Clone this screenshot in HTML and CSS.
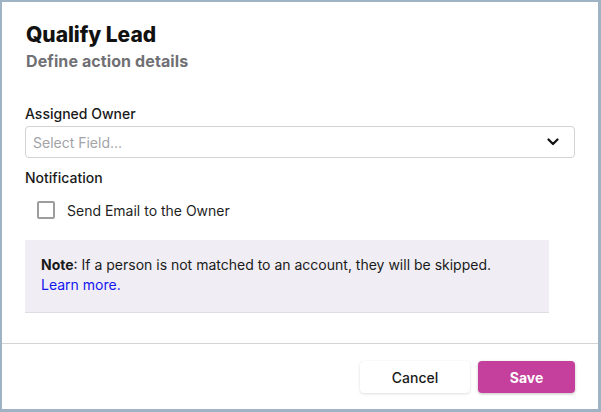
FILE: index.html
```html
<!DOCTYPE html>
<html>
<head>
<meta charset="utf-8">
<link rel="stylesheet" href="styles.css">
</head>
<body>
<div class="modal">
  <div class="content">
    <h1 class="title">Qualify Lead</h1>
    <div class="subtitle">Define action details</div>
    <div class="field">
      <div class="label">Assigned Owner</div>
      <div class="select">
        <span class="placeholder">Select Field...</span>
        <svg class="chev" width="12" height="8" viewBox="0 0 12 8"><path d="M1.5 1.5 L6 6 L10.5 1.5" fill="none" stroke="#111" stroke-width="2.2" stroke-linecap="round" stroke-linejoin="round"/></svg>
      </div>
    </div>
    <div class="label notif">Notification</div>
    <label class="check-row">
      <span class="checkbox"></span>
      <span>Send Email to the Owner</span>
    </label>
    <div class="note">
      <p><b>Note</b>: If a person is not matched to an account, they will be skipped.<br><a class="link" href="#">Learn more.</a></p>
    </div>
  </div>
  <div class="footer">
    <button class="btn cancel">Cancel</button>
    <button class="btn save">Save</button>
  </div>
</div>
</body>
</html>
```
FILE: styles.css
```css
html, body { margin: 0; padding: 0; }
body {
  background: #9fb3c4;
  padding: 2px 3px 3px 2px;
  width: 601px;
  height: 412px;
  box-sizing: border-box;
  font-family: Inter, "Noto Sans", sans-serif;
  color: #1a1a1a;
}
.modal {
  background: #fff;
  height: 407px;
  display: flex;
  flex-direction: column;
}
.content {
  padding: 21px 23px 0 23px;
  height: 342px;
  border-bottom: 1px solid #d4d4d4;
  box-sizing: border-box;
}
.title {
  margin: 0;
  font-size: 21px;
  font-weight: 800;
  line-height: 24px;
  padding-left: 1px;
  color: #111;
  letter-spacing: -0.05px;
}
.subtitle {
  margin-top: 5px;
  font-size: 16px;
  font-weight: 700;
  color: #707074;
  line-height: 18px;
  padding-left: 1px;
  letter-spacing: 0.1px;
}
.field { margin-top: 35px; }
.label {
  font-size: 14px;
  font-weight: 500;
  line-height: 17px;
  color: #1a1a1a;
}
.select {
  margin-top: 4px;
  height: 32px;
  box-sizing: border-box;
  border: 1px solid #d3d3d3;
  border-radius: 4px;
  display: flex;
  align-items: center;
  justify-content: space-between;
  padding: 0 15px 0 7px;
}
.placeholder { font-size: 14px; color: #a3a3a8; }
.chev { display: block; }
.notif { margin-top: 11px; }
.check-row {
  display: flex;
  align-items: center;
  margin-top: 15px;
  padding-left: 12px;
  font-size: 14px;
  color: #1f1f1f;
}
.checkbox {
  width: 14px;
  height: 14px;
  border: 2px solid #9d9d9d;
  border-radius: 2px;
  margin-right: 12px;
}
.note {
  margin-top: 21px;
  width: 524px;
  height: 73px;
  box-sizing: border-box;
  background: #f0eef4;
  border-bottom: 1px solid #dedde3;
  padding: 15px 16px 0 16px;
}
.note p {
  margin: 0;
  font-size: 14px;
  line-height: 20px;
  color: #1a1a1a;
}
.link { color: #1515f0; text-decoration: none; }
.footer {
  flex: 1;
  display: flex;
  justify-content: flex-end;
  align-items: flex-start;
  gap: 8px;
  padding: 17px 23px 0 0;
}
.btn {
  height: 32px;
  border: none;
  border-radius: 4px;
  font-family: Inter, "Noto Sans", sans-serif;
  font-size: 14px;
  cursor: pointer;
}
.cancel {
  width: 110px;
  background: #fff;
  color: #1a1a1a;
  font-weight: 500;
  box-shadow: 0 1px 3px rgba(0,0,0,0.12), 0 0 1px rgba(0,0,0,0.08);
}
.save {
  width: 97px;
  background: #c4409c;
  color: #fff;
  font-weight: 700;
  box-shadow: 0 1px 3px rgba(0,0,0,0.25);
}
```
